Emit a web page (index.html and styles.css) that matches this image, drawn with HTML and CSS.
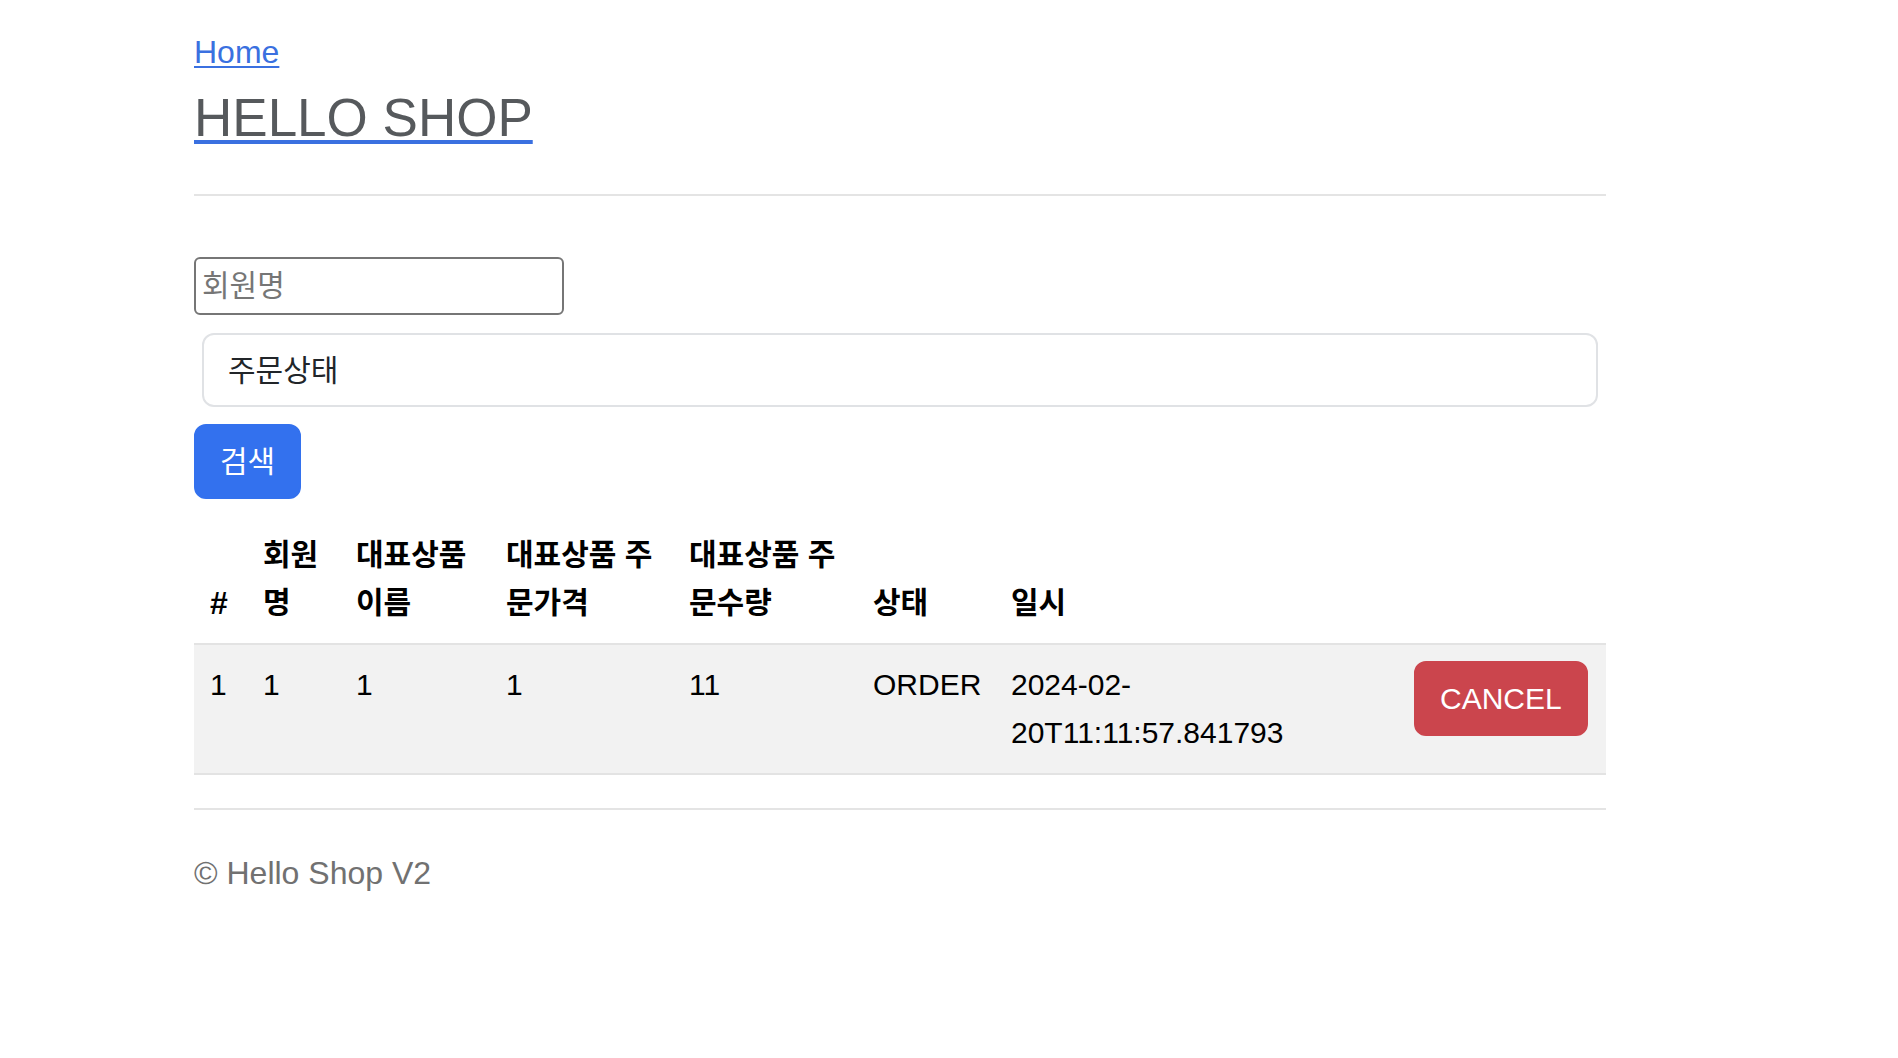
FILE: index.html
```html
<!DOCTYPE html>
<html lang="ko">
<head>
<meta charset="utf-8">
<title>HELLO SHOP</title>
<link rel="stylesheet" href="styles.css">
</head>
<body>
<div class="container">
  <header class="header">
    <a class="home-link" href="#">Home</a>
    <h3 class="brand"><a href="#"><span class="brand-text">HELLO SHOP</span></a></h3>
  </header>
  <hr class="divider">
  <form class="search-form">
    <input class="name-input" type="text" placeholder="회원명">
    <select class="status-select"><option>주문상태</option><option>ORDER</option><option>CANCEL</option></select>
    <button class="btn btn-primary" type="button">검색</button>
  </form>
  <table class="orders">
    <colgroup>
      <col class="c-id"><col class="c-member"><col class="c-item"><col class="c-price"><col class="c-count"><col class="c-status"><col class="c-date"><col class="c-action">
    </colgroup>
    <thead>
      <tr>
        <th>#</th>
        <th class="ko">회원명</th>
        <th class="ko">대표상품 이름</th>
        <th class="ko">대표상품 주문가격</th>
        <th class="ko">대표상품 주문수량</th>
        <th class="ko">상태</th>
        <th class="ko">일시</th>
        <th></th>
      </tr>
    </thead>
    <tbody>
      <tr>
        <td>1</td>
        <td>1</td>
        <td>1</td>
        <td>1</td>
        <td>11</td>
        <td>ORDER</td>
        <td>2024-02-<wbr>20T11:11:57.841793</td>
        <td><button class="btn btn-danger" type="button">CANCEL</button></td>
      </tr>
    </tbody>
  </table>
  <footer class="footer">
    <hr class="divider">
    <p class="copy">© Hello Shop V2</p>
  </footer>
</div>
</body>
</html>
```
FILE: styles.css
```css
html, body {
  margin: 0;
  padding: 0;
  background: #ffffff;
}

body {
  font-family: "Liberation Sans", "Noto Sans CJK KR", sans-serif;
  font-size: 32px;
  line-height: 48px;
  color: #212529;
}

.container {
  width: 1412px;
  margin-left: 194px;
  padding-top: 28px;
}

.header {
  display: flex;
  flex-direction: column;
  align-items: flex-start;
}

.home-link {
  color: #3a70e0;
  text-decoration: underline;
  text-decoration-thickness: 2px;
  text-underline-offset: 3px;
}

.brand {
  margin: 10px 0 12px;
  font-size: 53px;
  line-height: 64px;
  font-weight: 400;
}

.brand a {
  color: #3a70e0;
  text-decoration: underline;
  text-decoration-thickness: 4px;
  text-underline-offset: 4px;
}

.brand-text {
  color: #56595c;
}

.divider {
  border: 0;
  border-top: 2px solid #e4e4e4;
  height: 0;
  margin: 32px 0 0;
}

.search-form {
  display: flex;
  flex-direction: column;
  align-items: flex-start;
  padding-top: 61px;
}

.ko,
.name-input,
.status-select,
.btn-primary {
  font-family: "Liberation Sans", "Noto Sans CJK KR", sans-serif;
  font-size: 30px;
}

.name-input {
  box-sizing: border-box;
  width: 370px;
  height: 58px;
  margin: 0;
  padding: 0 6px;
  border: 2px solid #767676;
  border-radius: 6px;
  color: #212529;
  background: #fff;
  outline: none;
}

.name-input::placeholder {
  color: #767676;
}

.status-select {
  box-sizing: border-box;
  align-self: stretch;
  height: 74px;
  margin: 18px 8px 0;
  padding: 0 24px;
  border: 2px solid #e0e2e5;
  border-radius: 12px;
  background: #fff;
  color: #212529;
  -webkit-appearance: none;
  appearance: none;
}

.btn {
  box-sizing: border-box;
  height: 75px;
  padding: 0 24px;
  border-radius: 12px;
  color: #fff;
  cursor: pointer;
  line-height: 48px;
}

.btn-primary {
  margin-top: 17px;
  border: 2px solid #3371ee;
  background: #3371ee;
}

.btn-danger {
  font-family: "Liberation Sans", sans-serif;
  font-size: 30px;
  border: 2px solid #cb454d;
  background: #cb454d;
}

.orders {
  width: 100%;
  margin-top: 16px;
  border-collapse: collapse;
  table-layout: fixed;
}

.c-id { width: 53px; }
.c-member { width: 93px; }
.c-item { width: 150px; }
.c-price { width: 183px; }
.c-count { width: 184px; }
.c-status { width: 138px; }
.c-date { width: 403px; }
.c-action { width: 208px; }

.orders th,
.orders td {
  padding: 16px;
  text-align: left;
  color: #000;
}

.orders th {
  vertical-align: bottom;
  font-weight: 700;
  border-bottom: 2px solid #e3e3e3;
}

.orders td {
  vertical-align: top;
  font-size: 30px;
  background: #f2f2f2;
  border-bottom: 2px solid #e3e3e3;
}

.footer .divider {
  margin-top: 33px;
}

.copy {
  margin: 39px 0 0;
  color: #717171;
}
```
